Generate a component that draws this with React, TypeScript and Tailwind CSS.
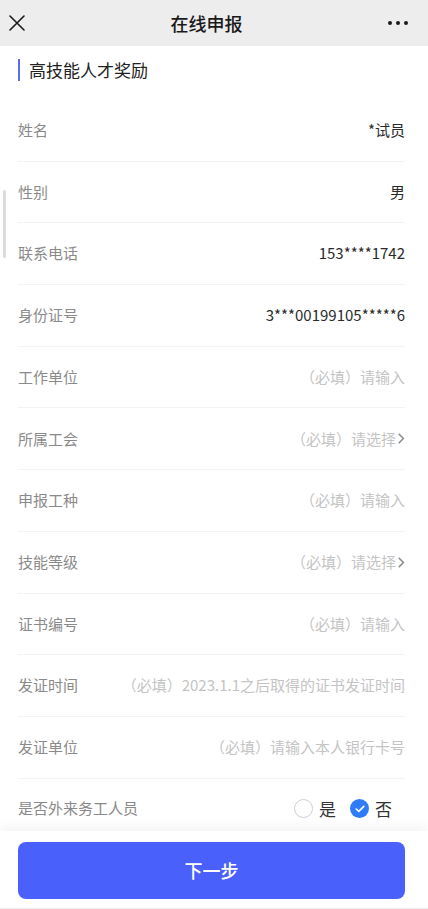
import { useState } from 'react'

type Field = {
  label: string
  value?: string
  placeholder?: string
  select?: boolean
}

const fields: Field[] = [
  { label: '姓名', value: '*试员' },
  { label: '性别', value: '男' },
  { label: '联系电话', value: '153****1742' },
  { label: '身份证号', value: '3***00199105*****6' },
  { label: '工作单位', placeholder: '（必填）请输入' },
  { label: '所属工会', placeholder: '（必填）请选择', select: true },
  { label: '申报工种', placeholder: '（必填）请输入' },
  { label: '技能等级', placeholder: '（必填）请选择', select: true },
  { label: '证书编号', placeholder: '（必填）请输入' },
  { label: '发证时间', placeholder: '（必填）2023.1.1之后取得的证书发证时间' },
  { label: '发证单位', placeholder: '（必填）请输入本人银行卡号' },
]

const Chevron = () => (
  <svg width="7" height="11" viewBox="0 0 7 11" className="ml-[2px]">
    <path d="M1.2 1.2 L5.4 5.5 L1.2 9.8" fill="none" stroke="#8c8c8c" strokeWidth="1.6" strokeLinecap="round" strokeLinejoin="round" />
  </svg>
)

const Radio = ({ checked }: { checked: boolean }) =>
  checked ? (
    <span className="flex h-[19px] w-[19px] items-center justify-center rounded-full bg-[#2f7cf6]">
      <svg width="10" height="8" viewBox="0 0 10 8">
        <path d="M1.2 4 L3.8 6.4 L8.8 1.4" fill="none" stroke="#fff" strokeWidth="1.6" strokeLinecap="round" strokeLinejoin="round" />
      </svg>
    </span>
  ) : (
    <span className="h-[19px] w-[19px] rounded-full border border-[#cfcfcf]" />
  )

const App = () => {
  const [migrant, setMigrant] = useState(false)

  return (
    <div
      className="flex h-[909px] w-[428px] flex-col overflow-hidden bg-white"
      style={{ fontFamily: '"Noto Sans CJK SC", "Noto Sans", sans-serif' }}
    >
      {/* 顶部导航 */}
      <div className="flex h-[46px] shrink-0 items-center justify-between bg-[#ededed] pl-[9px] pr-[20px]">
        <svg width="16" height="16" viewBox="0 0 16 16">
          <path d="M1 1 L15 15 M15 1 L1 15" stroke="#1a1a1a" strokeWidth="1.6" strokeLinecap="round" />
        </svg>
        <div className="text-[18px] font-medium text-[#1a1a1a]">在线申报</div>
        <div className="flex w-[20px] items-center justify-between">
          <span className="h-[4px] w-[4px] rounded-full bg-[#1a1a1a]" />
          <span className="h-[4px] w-[4px] rounded-full bg-[#1a1a1a]" />
          <span className="h-[4px] w-[4px] rounded-full bg-[#1a1a1a]" />
        </div>
      </div>

      {/* 表单 */}
      <div className="relative flex-1 overflow-hidden">
        <div className="absolute left-[3px] top-[144px] h-[68px] w-[3px] rounded-full bg-[#dcdcdc]" />

        <div className="mb-[6px] flex h-[48px] items-center px-[18px]">
          <span className="mr-[9px] h-[22px] w-[2px] bg-[#5b6cf0]" />
          <span className="text-[17px] text-[#222]">高技能人才奖励</span>
        </div>

        <div className="pl-[18px] pr-[23px]">
          {fields.map((f) => (
            <div key={f.label} className="flex h-[61.7px] items-center justify-between border-b border-[#f3f3f3]">
              <span className="shrink-0 text-[15px] text-[#8a8a8a]">{f.label}</span>
              {f.value ? (
                <span className="text-[15px] text-[#2a2a2a]">{f.value}</span>
              ) : (
                <span className="flex items-center text-[15px] text-[#c4c4c4]">
                  {f.placeholder}
                  {f.select && <Chevron />}
                </span>
              )}
            </div>
          ))}

          <div className="flex h-[60px] items-center justify-between">
            <span className="text-[15px] text-[#8a8a8a]">是否外来务工人员</span>
            <div className="flex items-center pr-[13px] text-[17px] text-[#333]">
              <button className="flex items-center" onClick={() => setMigrant(true)}>
                <Radio checked={migrant} />
                <span className="ml-[6px]">是</span>
              </button>
              <button className="ml-[14px] flex items-center" onClick={() => setMigrant(false)}>
                <Radio checked={!migrant} />
                <span className="ml-[6px]">否</span>
              </button>
            </div>
          </div>
        </div>
      </div>

      {/* 底部按钮 */}
      <div className="relative z-10 shrink-0 bg-white pb-[10px] pl-[18px] pr-[23px] pt-[11px] shadow-[0_-6px_10px_rgba(0,0,0,0.04)]">
        <button className="flex h-[57px] w-full items-center justify-center rounded-[8px] bg-[#4a60fb] text-[18px] font-medium text-white">
          下一步
        </button>
        <div className="absolute bottom-0 left-0 right-0 h-px bg-[#ececec]" />
      </div>
    </div>
  )
}

export default App
